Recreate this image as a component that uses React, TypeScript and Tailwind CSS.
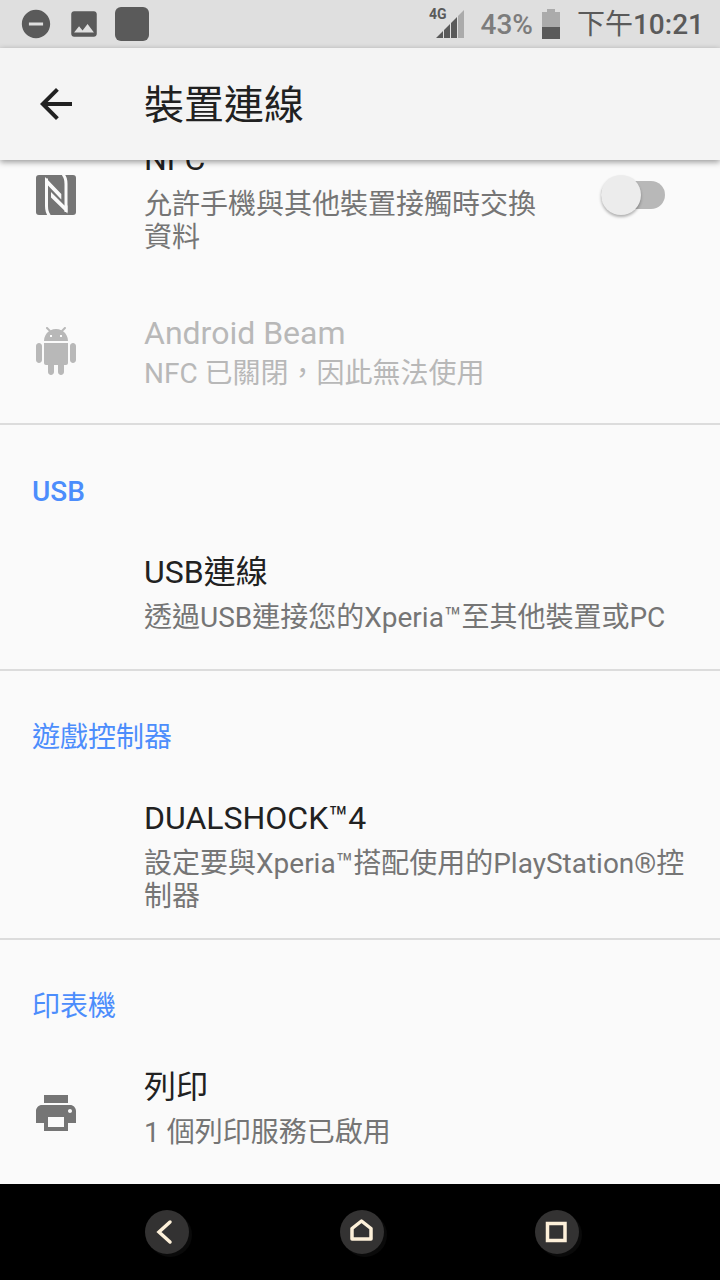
import type {ReactNode} from "react";
import {MdArrowBack, MdPhoto, MdPrint, MdRemoveCircle} from "react-icons/md";

function NfcIcon() {
  return (
    <svg viewBox="0 0 48 48" className="size-12" aria-hidden="true">
      <rect x="4" y="4" width="40" height="40" rx="3" fill="currentColor"/>
      <g fill="none" stroke="#fafafa" strokeWidth="3">
        <path d="M14.500 7.500V35c0 4.500.5 7 3 9.500"/>
        <path d="M34 41V13c0-4.500-.5-7-3-9.500"/>
      </g>
      <path d="M13 6l16.300 17v5.500L16 14.500h-3zM35.500 42.500L19 26.500V21l13.500 13.500h3z" fill="#fafafa"/>
    </svg>
  );
}

function AndroidIcon() {
  return (
    <svg viewBox="0 0 24 24" className="size-12" fill="currentColor" aria-hidden="true">
      <path
        d="M6 18c0 .55.45 1 1 1h1v3.5c0 .83.67 1.5 1.5 1.5s1.5-.67 1.5-1.5V19h2v3.5c0 .83.67 1.5 1.5 1.5s1.5-.67 1.5-1.5V19h1c.55 0 1-.45 1-1V8H6v10zM3.5 8C2.670 8 2 8.670 2 9.500v7c0 .83.67 1.5 1.5 1.5S5 17.330 5 16.500v-7C5 8.670 4.330 8 3.500 8zm17 0c-.83 0-1.5.67-1.5 1.5v7c0 .83.67 1.5 1.5 1.5s1.5-.67 1.5-1.5v-7c0-.83-.67-1.5-1.5-1.5zm-4.970-5.840l1.300-1.300c.2-.2.2-.51 0-.71-.2-.2-.51-.2-.71 0l-1.480 1.480C13.850 1.230 12.950 1 12 1c-.96 0-1.860.23-2.660.63L7.850.15c-.2-.2-.51-.2-.71 0-.2.2-.2.51 0 .71l1.310 1.310C6.970 3.260 6 5.010 6 7h12c0-1.990-.97-3.750-2.470-4.840zM10 5H9V4h1v1zm5 0h-1V4h1v1z"/>
    </svg>
  );
}

function SignalIcon() {
  return (
    <svg viewBox="0 0 28 28" className="size-7" fill="currentColor" aria-hidden="true">
      <path d="M0 28l7-7v7zM8 20l6-6v14H8zM15 13l6-6v21h-6z"/>
      <path d="M22 6l6-6v28h-6z" fill="#ababab"/>
    </svg>
  );
}

function BatteryIcon() {
  return (
    <svg viewBox="0 0 20 30" className="h-[30px] w-5" aria-hidden="true">
      <path d="M1 3h5V0h8v3h5v15H1z" fill="#ababab"/>
      <path d="M1 18h18v12H1z" fill="#5a5a5a"/>
    </svg>
  );
}

function StatusBar() {
  return (
    <div className="flex h-12 items-center bg-[#dfdfdf] pr-4 pl-[19px] text-[28px] font-medium leading-8 text-[#5a5a5a]">
      <div className="flex flex-1 items-center gap-[14px]">
        <MdRemoveCircle className="size-[34px]"/>
        <MdPhoto className="size-[34px]"/>
        <span className="size-[34px] rounded-md bg-[#5a5a5a]"/>
      </div>
      <div className="flex items-center">
        <span className="-mr-2.5 mb-5 text-sm leading-4 font-bold">4G</span>
        <SignalIcon/>
        <span className="ml-4 pt-0.5 text-[#7c7c7c]">43%</span>
        <span className="mr-4 ml-2"><BatteryIcon/></span>
        <span className="pt-0.5"><span className="font-normal">下午</span>10:21</span>
      </div>
    </div>
  );
}

function Category({children}: { children: ReactNode }) {
  return (
    <h2 className="border-t-2 border-[#dcdcdc] px-8 pt-[51px] pb-[17px] text-[28px] leading-8 text-[#4c8dfc]">
      {children}
    </h2>
  );
}

interface PreferenceProps {
  title: string;
  summary: string;
  icon?: ReactNode;
  disabled?: boolean;
}

function PreferenceText({title, summary, disabled}: PreferenceProps) {
  return (
    <span className={disabled ? "flex flex-1 flex-col gap-1 self-center" : "flex flex-1 flex-col gap-[9px]"}>
      <span className={disabled ? "text-[32px] leading-10" : "text-[32px] leading-10 text-[#212121]"}>{title}</span>
      <span className="text-[28px] leading-[33px]">{summary}</span>
    </span>
  );
}

function Preference(props: PreferenceProps) {
  return (
    <button
      type="button"
      disabled={props.disabled}
      className="flex min-h-36 w-full items-start px-8 pt-[27px] pb-[25px] text-left text-[#757575] disabled:py-0 disabled:text-[#b8b8b8]"
    >
      <span className="mr-16 size-12 shrink-0 self-center">{props.icon}</span>
      <PreferenceText {...props}/>
    </button>
  );
}

function SwitchPreference(props: PreferenceProps) {
  return (
    <label className="flex min-h-36 w-full items-start px-8 pt-[27px] pb-[25px] text-[#757575]">
      <span className="mr-16 mb-1 size-12 shrink-0 self-center">{props.icon}</span>
      <PreferenceText {...props}/>
      <input
        type="checkbox"
        role="switch"
        className="mr-[23px] mb-1 ml-14 flex h-7 w-16 shrink-0 appearance-none items-center self-center rounded-full bg-[#b8b8b8] before:size-10 before:rounded-full before:bg-[#ececec] before:shadow-[0_2px_3px_rgba(0,0,0,0.3)] checked:justify-end"
      />
    </label>
  );
}

function NavButton({label, children}: { label: string; children: ReactNode }) {
  return (
    <button type="button" aria-label={label} className="rounded-full bg-[#333232] shadow-[3px_3px_0_#0a0a0a]">
      <svg viewBox="0 0 44 44" className="size-11" fill="none" stroke="#fdf0d9" strokeWidth="3.5" aria-hidden="true">
        {children}
      </svg>
    </button>
  );
}

export default function App() {
  return (
    <div className="flex min-h-screen flex-col bg-[#fafafa] font-[Roboto,'Noto_Sans_CJK_TC',sans-serif]">
      <StatusBar/>

      <header className="z-10 flex h-28 items-center bg-[#f4f4f4] px-8 shadow-[0_2px_6px_rgba(0,0,0,0.4)]">
        <button type="button" aria-label="返回" className="mr-16 text-[#212121]">
          <MdArrowBack className="size-12"/>
        </button>
        <h1 className="pt-1 text-[40px] leading-12 text-[#212121]">裝置連線</h1>
      </header>

      {/* the list is scrolled, so its first row starts under the header */}
      <main className="flex-1 overflow-hidden">
        <div className="-mt-12">
          <SwitchPreference title="NFC" summary="允許手機與其他裝置接觸時交換資料" icon={<NfcIcon/>}/>
          <Preference
            title="Android Beam"
            summary="NFC 已關閉，因此無法使用"
            icon={<AndroidIcon/>}
            disabled
          />

          <Category><span className="font-medium">USB</span></Category>
          <Preference title="USB連線" summary="透過USB連接您的Xperia™至其他裝置或PC"/>

          <Category>遊戲控制器</Category>
          <Preference title="DUALSHOCK™4" summary="設定要與Xperia™搭配使用的PlayStation®控制器"/>

          <Category>印表機</Category>
          <Preference title="列印" summary="1 個列印服務已啟用" icon={<MdPrint className="size-12"/>}/>
        </div>
      </main>

      <nav className="flex h-24 items-center justify-center gap-[151px] bg-black pl-[3px]">
        <NavButton label="返回"><path d="M25 12L14 22l11 10" strokeLinecap="round"/></NavButton>
        <NavButton label="首頁"><path d="M12 18.500L21.500 11l9.500 7.500V29H12z" strokeLinejoin="round"/></NavButton>
        <NavButton label="最近使用的應用程式"><path d="M12.500 13.500h17.500v17H12.500z"/></NavButton>
      </nav>
    </div>
  );
}
